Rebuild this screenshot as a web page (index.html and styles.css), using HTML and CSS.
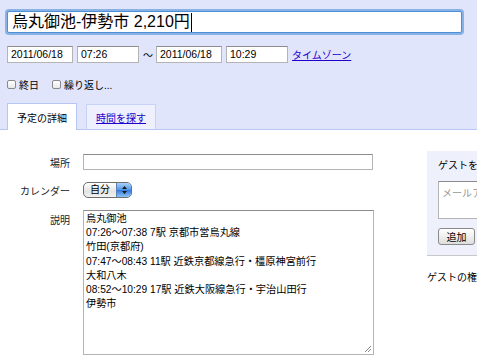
FILE: index.html
```html
<!DOCTYPE html>
<html lang="ja">
<head>
    <meta charset="UTF-8">
    <title>予定の編集</title>
    <link rel="stylesheet" href="styles.css">
</head>
<body>
    <!-- Header: title, dates, options, tabs -->
    <div class="top">
        <div class="title-field"><span>烏丸御池-伊勢市 2,210円</span><span class="caret"></span></div>

        <div class="when">
            <span class="field date">2011/06/18</span>
            <span class="field time">07:26</span>
            <span class="sep">〜</span>
            <span class="field date">2011/06/18</span>
            <span class="field time">10:29</span>
            <a href="#" class="link">タイムゾーン</a>
        </div>

        <div class="opts">
            <span class="opt"><span class="box"></span>終日</span>
            <span class="opt"><span class="box"></span>繰り返し...</span>
        </div>

        <div class="tabs">
            <div class="tab active">予定の詳細</div>
            <div class="tab"><a href="#" class="link">時間を探す</a></div>
        </div>
    </div>

    <!-- Details -->
    <div class="main">
        <div class="form">
            <div class="row">
                <div class="label">場所</div>
                <div class="field place"></div>
            </div>
            <div class="row">
                <div class="label">カレンダー</div>
                <div class="select">
                    <span class="select-text">自分</span>
                    <span class="select-arrows">
                        <svg width="7" height="10" viewBox="0 0 7 10"><path d="M3.5 1 L6 4 H1 Z M3.5 9 L6 6 H1 Z" fill="#1a1a1a"/></svg>
                    </span>
                </div>
            </div>
            <div class="row top-aligned">
                <div class="label">説明</div>
                <div class="field memo">
                    <div>烏丸御池</div>
                    <div>07:26〜07:38 7駅 京都市営烏丸線</div>
                    <div>竹田(京都府)</div>
                    <div>07:47〜08:43 11駅 近鉄京都線急行・橿原神宮前行</div>
                    <div>大和八木</div>
                    <div>08:52〜10:29 17駅 近鉄大阪線急行・宇治山田行</div>
                    <div>伊勢市</div>
                    <svg class="grip" width="8" height="8" viewBox="0 0 8 8"><path d="M7 1 L1 7 M7 4 L4 7" stroke="#888" stroke-width="1"/></svg>
                </div>
            </div>
        </div>

        <div class="side">
            <div class="guests">
                <div class="guests-title">ゲストを追加</div>
                <div class="guest-input">メールアドレスを入力</div>
                <button class="btn">追加</button>
            </div>
            <div class="perm">ゲストの権限</div>
        </div>
    </div>
</body>
</html>
```

FILE: styles.css
```css
body {
    margin: 0;
    padding: 0;
    background: #fff;
    color: #000;
    font-family: "Liberation Sans", "Noto Sans CJK JP", sans-serif;
    font-size: 10px;
    overflow: hidden;
    width: 477px;
    height: 359px;
}

.link {
    color: #2200cc;
    text-decoration: underline;
}

.field {
    box-sizing: border-box;
    background: #fff;
    border: 1px solid #b4b4b4;
    border-top-color: #8c8c8c;
}

/* Header */
.top {
    background: #e1e5fc;
    padding: 11px 0 0 7px;
    border-bottom: 1px solid #b8c6f4;
    height: 118px;
}

.title-field {
    box-sizing: border-box;
    width: 455px;
    height: 22px;
    background: #fff;
    border: 1px solid #4f8fd6;
    border-radius: 2px;
    box-shadow: 0 0 0 2px rgba(104, 160, 222, 0.75);
    padding-left: 4px;
    display: flex;
    align-items: center;
    font-size: 16px;
    line-height: 20px;
}

.caret {
    width: 1px;
    height: 19px;
    background: #000;
    margin-left: 1px;
}

.when {
    display: flex;
    align-items: center;
    gap: 4px;
    margin-top: 13px;
    height: 17px;
}

.when .field {
    height: 17px;
    padding-left: 3px;
    font-size: 10.5px;
    line-height: 15px;
}

.date {
    width: 66px;
}

.time {
    width: 62px;
}

.sep {
    width: 9px;
    font-size: 10px;
    text-align: center;
}

.opts {
    display: flex;
    align-items: center;
    gap: 13px;
    margin-top: 15px;
    height: 12px;
}

.opt {
    display: flex;
    align-items: center;
    gap: 3px;
}

.box {
    width: 9px;
    height: 9px;
    box-sizing: border-box;
    border: 1px solid #8a8a8a;
    border-radius: 2px;
    background: linear-gradient(#fff, #e8e8e8);
}

.tabs {
    display: flex;
    align-items: flex-end;
    gap: 9px;
    margin-top: 13px;
}

.tab {
    box-sizing: border-box;
    width: 70px;
    height: 25px;
    border: 1px solid #c6d2f7;
    border-bottom: none;
    background: #eef0fd;
    display: flex;
    align-items: center;
    justify-content: center;
}

.tab.active {
    height: 27px;
    background: #fff;
    border-color: #b8c6f4;
    margin-bottom: -1px;
}

/* Details */
.main {
    display: flex;
    padding-top: 21px;
}

.form {
    width: 374px;
    margin-top: 3px;
    display: flex;
    flex-direction: column;
    gap: 12px;
}

.row {
    display: flex;
    align-items: center;
    gap: 13px;
}

.row.top-aligned {
    align-items: flex-start;
}

.label {
    width: 70px;
    text-align: right;
    color: #222;
}

.top-aligned .label {
    padding-top: 2px;
}

.place {
    width: 290px;
    height: 16px;
}

.select {
    box-sizing: border-box;
    width: 49px;
    height: 16px;
    border: 1px solid #6f6f6f;
    border-radius: 5px;
    display: flex;
    overflow: hidden;
    background: linear-gradient(#ffffff, #e4e4e4 60%, #f2f2f2);
}

.select-text {
    flex: 1;
    text-align: center;
    line-height: 14px;
}

.select-arrows {
    width: 14px;
    border-left: 1px solid #5a7fb5;
    background: linear-gradient(#a8d0fb, #4f95e6 50%, #2e78dc 51%, #8ec2f8);
    display: flex;
    align-items: center;
    justify-content: center;
}

.memo {
    position: relative;
    width: 291px;
    height: 145px;
    padding: 1px 2px;
    line-height: 14.2px;
    font-size: 10.2px;
}

.grip {
    position: absolute;
    right: 1px;
    bottom: 1px;
}

.side {
    margin-left: 53px;
    flex-shrink: 0;
    width: 200px;
}

.guests {
    box-sizing: border-box;
    height: 105px;
    background: #eef0fc;
    border-bottom: 1px solid #c8c8c8;
    padding: 8px 0 0 11px;
}

.guests-title {
    line-height: 14px;
}

.guest-input {
    box-sizing: border-box;
    width: 150px;
    height: 38px;
    margin-top: 8px;
    background: #fff;
    border: 1px solid #b4b4b4;
    border-top-color: #8c8c8c;
    padding: 3px 3px;
    color: #999;
}

.btn {
    display: block;
    box-sizing: border-box;
    width: 37px;
    height: 17px;
    margin-top: 9px;
    padding: 0;
    border: 1px solid #8a8a8a;
    border-radius: 3px;
    background: linear-gradient(#ffffff, #dedede);
    font-family: inherit;
    font-size: 10px;
    color: #000;
}

.perm {
    margin-top: 15px;
    line-height: 14px;
}
```
